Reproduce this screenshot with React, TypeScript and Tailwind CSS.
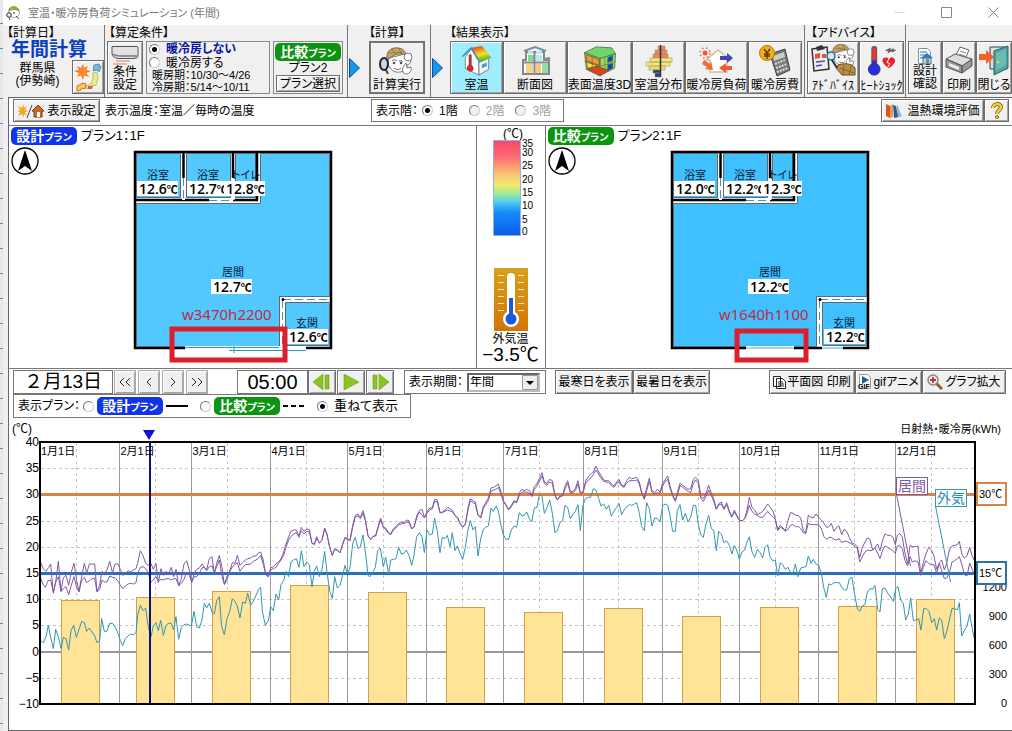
import type { ReactNode } from "react";

/* ---------- small shared pieces ---------- */

function PlanBadge({ kind }: { kind: "design" | "compare" }) {
  const color = kind === "design" ? "bg-[#1034ea]" : "bg-[#0a9410]";
  return (
    <span className={`inline-flex h-[18px] w-[66px] shrink-0 items-center justify-center rounded-[5px] text-[14px] leading-none font-bold text-white ${color}`}>
      {kind === "design" ? "設計" : "比較"}
      <span className="pt-[3px] text-[10px] leading-none">プラン</span>
    </span>
  );
}

function PushButton({ children, className = "", label }: { children: ReactNode; className?: string; label?: string }) {
  return (
    <button
      type="button"
      aria-label={label}
      className={`flex items-center justify-center border border-[#6e6e6e] bg-[#f0f0f0] whitespace-nowrap shadow-[inset_1px_1px_0_#fff,inset_-1px_-1px_0_#a5a5a5] ${className}`}
    >
      {children}
    </button>
  );
}

function ToolButton({ icon, text, className = "" }: { icon: ReactNode; text: string; className?: string }) {
  return (
    <button
      type="button"
      className={`flex h-[53px] flex-col items-center justify-between overflow-hidden border border-[#6e6e6e] pb-px text-[12px] leading-[14px] whitespace-nowrap shadow-[inset_1px_1px_0_#fff,inset_-1px_-1px_0_#a5a5a5] ${className}`}
    >
      {icon}
      <span>{text}</span>
    </button>
  );
}

function Radio({ name, children, checked, disabled, className = "" }: { name: string; children: ReactNode; checked?: boolean; disabled?: boolean; className?: string }) {
  return (
    <label className={`flex items-center whitespace-nowrap ${disabled ? "text-[#a0a0a0]" : ""} ${className}`}>
      <input
        type="radio"
        name={name}
        defaultChecked={checked}
        disabled={disabled}
        className="size-[11px] shrink-0 appearance-none rounded-full border border-t-[#777] border-r-[#ccc] border-b-[#ccc] border-l-[#777] bg-white checked:bg-[radial-gradient(circle,#000_2px,#fff_3px)] disabled:bg-[#f0f0f0]"
      />
      {children}
    </label>
  );
}

function StepArrow() {
  return (
    <svg viewBox="0 0 11 20" className="mt-[33px] h-5 w-[11px] shrink-0">
      <path d="M.5.5v19l10-9.500z" fill="#1597ee" stroke="#0a48ac" />
    </svg>
  );
}

/* ---------- toolbar icons ---------- */

function SheepFace() {
  return (
    <g stroke="#444" strokeWidth=".7">
      <path d="M10 13c-2 6 0 12 7 14 7 1 11-3 11-7 4-1 5-5 2-7-1-4-6-5-8-3z" fill="#fff" />
      <path d="M8 11c0-6 6-9 11-8 5 0 8 4 8 7-6-2-11-1-16 3-2 1-4 0-3-2z" fill="#c9a45c" />
      <path d="M13 4l5 6M20 3l2 6M10 8l14-1" stroke="#8a6a2c" fill="none" />
      <path d="M13 16c2-2 4-1 5 0M20 16c2-1 3 0 4 1M15 23c2 2 5 2 7 0" fill="none" stroke="#222" />
      <circle cx="15" cy="18" r=".9" fill="#111" />
      <circle cx="22" cy="18" r=".9" fill="#111" />
      <circle cx="29" cy="12" r="4" fill="#fff" />
      <path d="M24 22l3-4 1 5 4-1c1 3-1 7-5 7-3 0-4-3-3-7z" fill="#fff" />
    </g>
  );
}

function AppIcon() {
  return (
    <svg viewBox="0 0 16 16" className="size-4">
      <path d="M3 6c1-4 6-5 9-2 2 2 2 6-1 8-3 1-7 0-8-2z" fill="#fff" stroke="#888" strokeWidth=".7" />
      <path d="M3 4c3-4 9-3 10 2-3-2-7-2-10 0z" fill="#a4b82f" stroke="#66761c" strokeWidth=".6" />
      <circle cx="3" cy="10" r="2.300" fill="#dfe9ee" stroke="#333" />
      <circle cx="8" cy="8" r=".8" />
      <path d="M3 12l1 3M10 11l3 3" stroke="#555" />
    </svg>
  );
}

function WeatherMapIcon() {
  return (
    <svg viewBox="0 0 30 32" className="h-8 w-[30px]">
      <path d="M10 3l1 4 4-2-2 4 5 1-5 2 3 4-5-2-1 5-2-5-4 2 2-4-5-2 5-1-2-4 4 2z" fill="#f4741c" />
      <circle cx="10" cy="11" r="4" fill="#f98a2a" />
      <path d="M21 4l5-1 2 3-2 5-2-2-4 1z" fill="#71b9e4" stroke="#3477a9" strokeWidth=".7" />
      <path d="M20 12l4-1 1 6-2 7-5 1-4 3-1-3 5-2 2-5z" fill="#dff28a" stroke="#bfa733" strokeWidth=".7" />
      <path d="M4 25l6-3 3 1-1 5-3-1-1 2-4 1z" fill="#f8cb5a" stroke="#d06f2b" />
      <path d="M15 25l5 0-1 3-4 0z" fill="#ef5b34" />
    </svg>
  );
}

function AirconIcon() {
  return (
    <svg viewBox="0 0 30 23" className="h-[23px] w-[30px]">
      <path d="M2 3.500h25q1 0 1 2v8q-1 2-5 2H8q-6-1-6-5z" fill="#e2e2e2" stroke="#555" />
      <path d="M3 11q2 2 8 2h16" fill="none" stroke="#777" strokeWidth="1.500" />
      <path d="M6 18h14M3 21h14" fill="none" stroke="#eaa58d" strokeWidth="1.500" />
    </svg>
  );
}

function DetectiveIcon() {
  return (
    <svg viewBox="0 0 38 34" className="h-[34px] w-[38px]">
      <g transform="translate(1 3)"><SheepFace /></g>
      <path d="M8 28l2 4" stroke="#444" strokeWidth="2" />
      <ellipse cx="6" cy="22" rx="4" ry="6" fill="#c4dce8" stroke="#223" strokeWidth="2" />
    </svg>
  );
}

function HouseTempIcon() {
  return (
    <svg viewBox="0 0 34 36" className="mt-px h-9 w-[34px]">
      <defs>
        <linearGradient id="roof" x1="0" y1="0" x2=".3" y2="1">
          <stop offset="0" stopColor="#ed2416" /><stop offset=".4" stopColor="#f6a21d" /><stop offset=".6" stopColor="#f3e51d" /><stop offset="1" stopColor="#35b33b" />
        </linearGradient>
      </defs>
      <path d="M5 15l6-9 8 13v14L5 26z" fill="#fff" stroke="#555" strokeWidth=".7" />
      <path d="M19 19l10-4v12l-10 6z" fill="#f4f4f4" stroke="#555" strokeWidth=".7" />
      <path d="M11 5l11-2 10 12-12 5z" fill="url(#roof)" />
      <path d="M2 14l9-9 9 15" fill="none" stroke="#2c97c8" strokeWidth="1.500" />
      <path d="M22 22l5-2v4l-5 2z" fill="#3e9be0" />
      <path d="M10 13v12" stroke="#a33" strokeWidth="3" strokeLinecap="round" />
      <circle cx="10" cy="26" r="3" fill="#e0251c" stroke="#a33" />
    </svg>
  );
}

function SectionIcon() {
  return (
    <svg viewBox="0 0 34 34" className="mt-0.5 h-[34px] w-[34px]">
      <path d="M8 8h18v8h5v14H5V16h3z" fill="#fff" stroke="#888" strokeWidth="2" />
      <path d="M6 7l11-4 11 4M25 15l7-1" fill="none" stroke="#7894a4" strokeWidth="2" />
      <path d="M10 7h5v3h-5zM18 7h6v3h-6z" fill="#b9e5f6" />
      <path d="M10 11h6v6h-6z" fill="#7fdc86" /><path d="M18 11h6v6h-6z" fill="#b7e5f3" />
      <path d="M8 20h7v9H8z" fill="#f3d486" /><path d="M18 20h5v9h-5z" fill="#fac57e" /><path d="M24 20h6v9h-6z" fill="#8fe0a5" />
      <path d="M5 18.500h26M16.500 8v22" stroke="#888" strokeWidth="2" />
    </svg>
  );
}

function Surface3DIcon() {
  return (
    <svg viewBox="0 0 38 36" className="mt-px h-9 w-[38px]">
      <g stroke="#3b704a" strokeWidth=".8">
        <path d="M3 10L15 4l16 1 4 6-16 5z" fill="#72d66c" />
        <path d="M3 10l16 6v17L5 27z" fill="#f7b540" />
        <path d="M19 16l16-5-1 15-15 7z" fill="#8ee06a" />
        <path d="M5 12l13 5v6L5 18z" fill="#f49a3a" />
        <path d="M5 19l13 5-12 2z" fill="#fbe04b" />
        <path d="M5 27l10-3 14 4-10 6z" fill="#ea3c1d" />
        <path d="M27 15l5-2v5l-5 2zM27 22l5-1v5l-5 2z" fill="#1443c1" />
        <path d="M19 16v17M3 19l16 5 16-5M11 13v14M24 15v16" fill="none" stroke="#996717" />
      </g>
    </svg>
  );
}

function DistributionIcon() {
  return (
    <svg viewBox="0 0 30 34" className="mt-0.5 h-[34px] w-[30px]">
      <g stroke="#998a4c" strokeWidth=".5">
        <path d="M14 2h7v4h-7zM11 6h12v4H11zM9 10h15v4H9z" fill="#ed8468" />
        <path d="M6 14h22v4H6zM2 18h24v4H2z" fill="#f4e67e" />
        <path d="M5 22h16v4H5z" fill="#e8dc68" />
        <path d="M9 26h7v3H9zM11 29h5v4h-5z" fill="#204486" />
      </g>
      <path d="M16.500 1v32" stroke="#333" strokeWidth="1.500" />
    </svg>
  );
}

function LoadIcon() {
  return (
    <svg viewBox="0 0 36 32" className="mt-1 h-8 w-9">
      <path d="M7 14L19 4l12 10h-3v12H11V14z" fill="#fff" stroke="#d1bda0" strokeWidth="1.500" />
      <circle cx="6" cy="7" r="2.500" fill="#ee5c35" />
      <circle cx="6" cy="7" r="5" fill="none" stroke="#ee6b42" strokeWidth="1.500" strokeDasharray="1.500 2.500" />
      <path d="M5 14l6 4 1-3 2 9-8-1 2-2-5-3z" fill="#ef6a35" />
      <path d="M21 10h7V7l6 5-6 5v-3h-7z" fill="#4244b3" />
      <path d="M33 20h-6v-3l-7 5 7 5v-3h6z" fill="#ef5a2f" />
    </svg>
  );
}

function CostIcon() {
  return (
    <svg viewBox="0 0 34 34" className="mt-0.5 h-[34px] w-[34px]">
      <path d="M12 10l15-5 5 21-13 6z" fill="#777" stroke="#444" />
      <path d="M15 12l11-4 1 5-11 4z" fill="#c3d4bd" />
      <path d="M17 20l10-4M18 24l11-4M19 28l11-4" stroke="#ddd" strokeWidth="2" strokeDasharray="2 1" />
      <circle cx="9" cy="9" r="7.500" fill="#f3ad15" stroke="#bd760d" />
      <path d="M6 5l3 4 3-4M9 9v6M6 10h6M6 12h6" fill="none" stroke="#553800" strokeWidth="1.300" />
    </svg>
  );
}

function AdviceIcon() {
  return (
    <svg viewBox="0 0 48 35" className="h-[35px] w-12">
      <path d="M3 7l15-2 2 22-15 2z" fill="#eee" stroke="#333" strokeWidth="1.500" />
      <path d="M7 5l6-2 3 4-8 2z" fill="#333" />
      <path d="M6 12l5-1v5l-5 1zM13 12h4v4h-4z" fill="#e5533a" /><path d="M7 20l9-1M7 24l6-1" stroke="#45a" strokeWidth="1.500" />
      <g transform="translate(17 0) scale(.85)"><SheepFace /></g>
      <path d="M29 23c5-2 14-2 17 3v7H33l-6-7z" fill="#bb8f4a" stroke="#6b4b1c" />
      <path d="M31 26l14 5M35 23l-1 10M42 24l-2 9" stroke="#765023" strokeWidth=".7" />
      <circle cx="22" cy="14" r="4" fill="#cce8f1" stroke="#2f6589" strokeWidth="1.500" /><path d="M23 18l5 8" stroke="#333" strokeWidth="2" />
    </svg>
  );
}

function HeatShockIcon() {
  return (
    <svg viewBox="0 0 36 34" className="mt-[3px] h-[34px] w-9">
      <path d="M10 4v19" stroke="#555" strokeWidth="6" strokeLinecap="round" />
      <path d="M10 4v13" stroke="#ed3437" strokeWidth="4" strokeLinecap="round" />
      <path d="M10 16v10" stroke="#282ee0" strokeWidth="4" />
      <circle cx="10" cy="25" r="6" fill="#282ee0" stroke="#34346b" />
      <path d="M25 24c-9-6-7-11-3-11 2 0 3 1 3 2 1-2 2-3 4-2 5 2 2 8-4 11z" fill="#e62431" />
      <path d="M26 13l-3 5 3 1-2 4" fill="none" stroke="#fff" />
      <path d="M22 6l4-2-1 3 5-3M28 7l4-2" fill="none" stroke="#555" strokeWidth="1.500" />
    </svg>
  );
}

function DesignCheckIcon() {
  return (
    <svg viewBox="0 0 18 18" className="mt-[3px] size-[18px]">
      <path d="M2.500 1.500h9l3 3v12h-12z" fill="#f7f9fa" stroke="#7693a5" />
      <path d="M4 5h7M4 8h5M4 11h3" stroke="#49758b" />
      <path d="M5 11l6-5 6 5z" fill="#3175cf" /><path d="M7 11h8v6H7z" fill="#f5d266" stroke="#3175cf" /><path d="M10 12h3v5h-3z" fill="#4f8ed1" />
    </svg>
  );
}

function PrinterIcon() {
  return (
    <svg viewBox="0 0 32 32" className="mt-0.5 size-8">
      <path d="M12 13l5-10 9 3-4 9z" fill="#fff" stroke="#666" />
      <path d="M17 7l6 2M16 10l6 2" stroke="#888" />
      <path d="M3 15l9-5 17 5-9 7z" fill="#ddd" stroke="#555" />
      <path d="M3 15v8l16 6v-7zM19 22v7l10-7v-7z" fill="#999" stroke="#555" />
      <path d="M6 19l10 4v3L6 22z" fill="#eee" />
    </svg>
  );
}

function ExitIcon() {
  return (
    <svg viewBox="0 0 32 34" className="mt-px h-[34px] w-8">
      <path d="M12 4h17v22H12z" fill="#ddd" stroke="#345" /><path d="M16 8l14-5v22l-14 7z" fill="#51a6a0" stroke="#27615f" />
      <path d="M18 10l10-4v16l-10 5z" fill="#6dbab2" /><circle cx="20" cy="19" r="1.300" fill="#eed34a" />
      <path d="M1 11h7V7l8 7-8 7v-4H1z" fill="#f26223" />
    </svg>
  );
}

/* ---------- header ---------- */

function TitleBar() {
  return (
    <header className="flex h-[25px] items-center bg-white pl-[3px]">
      <AppIcon />
      <h1 className="ml-[6px] text-[11px] text-[#777] whitespace-nowrap">室温・暖冷房負荷シミュレーション (年間)</h1>
      <div className="ml-auto flex gap-9 pr-[13px]">
        <button type="button" aria-label="最小化"><svg viewBox="0 0 11 11" className="size-[11px]"><path d="M0 5.500h11" stroke="#ddd" /></svg></button>
        <button type="button" aria-label="最大化"><svg viewBox="0 0 11 11" className="size-[11px]"><path d="M.5.5h10v10H.5z" fill="none" stroke="#888" /></svg></button>
        <button type="button" aria-label="閉じる"><svg viewBox="0 0 11 11" className="size-[11px]"><path d="M.5.5l10 10M10.500.5l-10 10" stroke="#888" /></svg></button>
      </div>
    </header>
  );
}

const resultTools = [
  { text: "室温", icon: <HouseTempIcon />, style: "w-[53px] bg-[#9feeff]" },
  { text: "断面図", icon: <SectionIcon />, style: "w-[64px] bg-[#f0f0f0]" },
  { text: "表面温度3D", icon: <Surface3DIcon />, style: "w-[65px] bg-[#f0f0f0]" },
  { text: "室温分布", icon: <DistributionIcon />, style: "w-[53px] bg-[#f0f0f0]" },
  { text: "暖冷房負荷", icon: <LoadIcon />, style: "w-[63px] bg-[#f0f0f0]" },
  { text: "暖冷房費", icon: <CostIcon />, style: "w-[54px] bg-[#f0f0f0]" },
];

function Toolbar() {
  return (
    <div className="flex h-[72px] overflow-hidden bg-[#f0f0f0]">
      <section className="w-[102px] shrink-0 border-r border-[#777]">
        <h2 className="h-4 pl-1 leading-4">【計算日】</h2>
        <p className="pl-2 text-[19px] leading-[17px] font-bold text-[#0b3fc0]">年間計算</p>
        <div className="flex">
          <p className="w-[69px] pt-1 text-center leading-[13px]">群馬県<br />(伊勢崎)</p>
          <PushButton label="地域" className="mt-0.5 h-[34px] w-8"><WeatherMapIcon /></PushButton>
        </div>
      </section>

      <section className="w-[243px] shrink-0 border-r border-[#777]">
        <h2 className="h-4 pl-1 leading-4">【算定条件】</h2>
        <div className="flex gap-[3px] pl-0.5">
          <PushButton className="h-[53px] w-9 flex-col leading-[13px]"><AirconIcon /><span>条件<br />設定</span></PushButton>
          <div className="h-[53px] w-[124px] border border-[#888] pl-0.5">
            <Radio name="hvac" checked className="h-[14px] gap-1.5 font-bold text-[#0b12a0]">暖冷房しない</Radio>
            <Radio name="hvac" className="h-[13px] gap-1.5">暖冷房する</Radio>
            <p className="pl-[3px] text-[11px] leading-[12px] whitespace-nowrap">暖房期：10/30～4/26<br />冷房期：5/14～10/11</p>
          </div>
          <div className="flex h-[53px] w-[70px] flex-col items-center border border-[#888] pt-px">
            <PlanBadge kind="compare" />
            <span className="leading-[14px]">プラン2</span>
            <PushButton className="h-[17px] w-[64px]">プラン選択</PushButton>
          </div>
        </div>
      </section>

      <section className="flex w-[83px] shrink-0 border-r border-[#777] pl-px">
        <StepArrow />
        <div>
          <h2 className="h-4 pl-[9px] leading-4">【計算】</h2>
          <ToolButton icon={<DetectiveIcon />} text="計算実行" className="ml-[9px] w-14 outline-1 -outline-offset-2 outline-[#777]" />
        </div>
      </section>

      <section className="flex grow border-r border-[#777] pr-0.5 pl-px">
        <StepArrow />
        <div className="grow">
          <h2 className="h-4 pl-[7px] leading-4">【結果表示】</h2>
          <div className="flex pl-[7px]">
            {resultTools.map((tool) => (
              <ToolButton key={tool.text} icon={tool.icon} text={tool.text} className={`grow ${tool.style}`} />
            ))}
          </div>
        </div>
      </section>

      <section className="w-[101px] shrink-0 border-r border-[#777] pl-0.5">
        <h2 className="h-4 pl-1 leading-4">【アドバイス】</h2>
        <div className="flex">
          <ToolButton icon={<AdviceIcon />} text="ｱﾄﾞﾊﾞｲｽ" className="w-[52px] font-['Noto_Sans_CJK_JP',sans-serif] [font-feature-settings:normal]" />
          <ToolButton icon={<HeatShockIcon />} text="ﾋｰﾄｼｮｯｸ" className="w-[45px] font-['Noto_Sans_CJK_JP',sans-serif] [font-feature-settings:normal]" />
        </div>
      </section>

      <div className="flex shrink-0 pt-4 pl-0.5">
        <PushButton className="h-[53px] w-[34px] flex-col justify-between pb-px leading-[13px]"><DesignCheckIcon /><span>設計<br />確認</span></PushButton>
        <ToolButton icon={<PrinterIcon />} text="印刷" className="w-[34px]" />
        <ToolButton icon={<ExitIcon />} text="閉じる" className="w-9" />
      </div>
    </div>
  );
}

function DisplayRow() {
  return (
    <div className="flex h-[28px] items-start border-b border-[#777] pt-px">
      <div className="flex w-[362px] items-center">
        <PushButton className="ml-1 h-[23px] w-[87px] gap-0.5">
          <svg viewBox="0 0 28 14" className="h-[14px] w-7">
            <path d="M6 0l1 4 3-2-2 4 4 1-4 1 2 4-3-2-1 4-1-4-4 2 2-4-3-1 3-1-2-4 4 2z" fill="#f5a81c" />
            <path d="M10 14l5-13" stroke="#444" />
            <path d="M15 7l6-6 6 6h-2v6h-8V7z" fill="#c66a2a" stroke="#7e3b12" /><path d="M20 8h3v5h-3z" fill="#fff" />
          </svg>
          表示設定
        </PushButton>
        <span className="ml-[5px] whitespace-nowrap">表示温度：室温／毎時の温度</span>
      </div>
      <fieldset className="flex h-[23px] w-[193px] items-center border border-[#777] pl-1">
        <span className="mr-1">表示階：</span>
        <Radio name="floor" checked className="mr-[11px] gap-1.5">1階</Radio>
        <Radio name="floor" disabled className="mr-[11px] gap-1.5">2階</Radio>
        <Radio name="floor" disabled className="gap-1.5">3階</Radio>
      </fieldset>
      <div className="ml-auto flex pr-[3px]">
        <PushButton className="h-[23px] w-[103px] gap-1">
          <svg viewBox="0 0 18 16" className="h-4 w-[18px]">
            <path d="M11 15l6-2-4-7z" fill="#bbb" /><path d="M1 1l4 2v12l-4-2z" fill="#d9541f" /><path d="M5 3l3-2v13l-3 1z" fill="#f19a49" />
            <path d="M8 2l3 1 2 11-4 1z" fill="#285a9b" /><path d="M11 3l2 0 3 10-2 1z" fill="#8cb6dd" />
          </svg>
          温熱環境評価
        </PushButton>
        <PushButton label="ヘルプ" className="h-[23px] w-[25px]">
          <svg viewBox="0 0 14 18" className="h-[18px] w-[14px]">
            <path d="M3 6c0-5 8-5 8-1 0 3-4 3-4 7" fill="none" stroke="#6d5713" strokeWidth="4" /><path d="M3 6c0-5 8-5 8-1 0 3-4 3-4 7" fill="none" stroke="#f5d132" strokeWidth="2.500" />
            <circle cx="7" cy="15" r="1.600" fill="#f5d132" stroke="#6d5713" strokeWidth=".8" />
          </svg>
        </PushButton>
      </div>
    </div>
  );
}

/* ---------- floor plans ---------- */

type PlanData = {
  kind: "design" | "compare";
  title: string;
  fill: string;
  temps: string[];
  note: string;
  box: { x: number; y: number; w: number; h: number };
};

const plans: PlanData[] = [
  { kind: "design", title: "プラン1：1F", fill: "#52c8ff", temps: ["12.6", "12.7", "12.8", "12.7", "12.6"], note: "w3470h2200", box: { x: 172, y: 329, w: 113, h: 31 } },
  { kind: "compare", title: "プラン2：1F", fill: "#40c0ff", temps: ["12.0", "12.2", "12.3", "12.2", "12.2"], note: "w1640h1100", box: { x: 200, y: 331, w: 69, h: 29 } },
];

const rooms = [
  { name: "浴室", x: 147, y: 179, vx: 137, vy: 181 },
  { name: "浴室", x: 197, y: 179, vx: 187, vy: 181 },
  { name: "トイレ", x: 232, y: 179, vx: 224, vy: 181 },
  { name: "居間", x: 222, y: 276, vx: 211, vy: 279 },
  { name: "玄関", x: 296, y: 327, vx: 287, vy: 329 },
];

function FloorPlan({ plan }: { plan: PlanData }) {
  const isDesign = plan.kind === "design";
  return (
    <svg viewBox="130 146 210 222" className="ml-[91px] h-[222px] w-[210px] shrink-0">
      <path d="M135 152h196v196H135z" fill="#fff" stroke="#000" strokeWidth="2.500" />
      <g fill={plan.fill} stroke="#5b6b75">
        <path d="M136.500 153.500h44v44h-44zM186.500 153.500h44v44h-44zM235.500 153.500h20v44h-20zM285.500 302.500h44v43h-44z" />
        <path d="M260.500 153.500h69v143h-50v50h-143v-143h124z" />
      </g>
      <path d="M183.500 152v26M233 152v26M257 152v48M135 200h74M233 200h25" stroke="#000" strokeWidth="2.500" />
      <path d="M183.500 178v22M233 178v22M209 200.500h24" stroke="#fff" strokeWidth="3" />
      <path d="M183.500 178v22M209 200.500h24M283 299.500h48M282.500 300v46" fill="none" stroke="#4d91ab" strokeDasharray="8 4" />
      <circle cx="283" cy="299.500" r="1.500" />
      {isDesign ? (
        <g>
          <path d="M185 348h121" stroke="#fff" strokeWidth="4" />
          <path d="M185 347.500h94M229 350.500h77M234 346v7" stroke="#2f95c8" />
        </g>
      ) : (
        <g>
          <path d="M209 348h48M285 348h21" stroke="#fff" strokeWidth="4" />
          <path d="M209 348h48M285 348h21" stroke="#58a8cf" strokeWidth="1" />
        </g>
      )}
      {rooms.map((room, i) => (
        <text key={i} x={room.x} y={room.y} fontSize="11" fill="#0c2036">{room.name}</text>
      ))}
      {rooms.map((room, i) => (
        <g key={i}>
          <rect x={room.vx} y={room.vy} width="41" height="15" fill="#fff" />
          <text x={room.vx + 2} y={room.vy + 13} fontSize="14" fontWeight="600" className="font-['Open_Sans','Noto_Sans_CJK_JP',sans-serif]">
            {plan.temps[i]}<tspan fontSize="11">℃</tspan>
          </text>
        </g>
      ))}
      <text x="182" y="320" fontSize="15" fill="#c22b45" className="font-['Noto_Sans',sans-serif]">{plan.note}</text>
      <rect x={plan.box.x} y={plan.box.y} width={plan.box.w} height={plan.box.h} fill="none" stroke="#dc1f2b" strokeWidth="5" />
    </svg>
  );
}

function PlanPane({ plan }: { plan: PlanData }) {
  return (
    <section className="min-w-0 flex-1 pl-0.5">
      <div className="flex h-5 items-center gap-1">
        <PlanBadge kind={plan.kind} />
        <h2 className="text-[13px] whitespace-nowrap">{plan.title}</h2>
      </div>
      <div className="flex items-start">
        <svg viewBox="0 0 28 28" className="mt-px size-7 shrink-0">
          <circle cx="14" cy="14" r="13" fill="#fff" stroke="#000" strokeWidth="1.300" />
          <path d="M14 3l7 21-7-5-7 5z" />
        </svg>
        <FloorPlan plan={plan} />
      </div>
    </section>
  );
}

const scaleTicks = [
  { v: 35, y: 21 }, { v: 30, y: 30 }, { v: 25, y: 43 }, { v: 20, y: 57 },
  { v: 15, y: 70 }, { v: 10, y: 83 }, { v: 5, y: 97 }, { v: 0, y: 109 },
];

function ScaleColumn() {
  return (
    <aside className="flex w-[70px] shrink-0 flex-col items-center border-x border-[#777]">
      <svg viewBox="477 126 68 142" className="h-[142px] w-[68px]">
        <defs>
          <linearGradient id="scale" x1="0" y1="0" x2="0" y2="1">
            <stop offset="0" stopColor="#f94768" /><stop offset=".17" stopColor="#fb6b72" /><stop offset=".35" stopColor="#fbc275" />
            <stop offset=".47" stopColor="#f4e96f" /><stop offset=".56" stopColor="#9fec93" /><stop offset=".64" stopColor="#59d0ee" />
            <stop offset=".75" stopColor="#168dfa" /><stop offset="1" stopColor="#0b5ce9" />
          </linearGradient>
        </defs>
        <text x="503" y="138" fontSize="12">(℃)</text>
        <path d="M493.500 140.500h27v95h-27z" fill="url(#scale)" stroke="#8cb3e8" />
        {scaleTicks.map((t) => (
          <text key={t.v} x="522" y={t.y + 126} fontSize="10">{t.v}</text>
        ))}
      </svg>
      <svg viewBox="0 0 34 63" className="h-[63px] w-[34px]">
        <defs><linearGradient id="amber" x1="0" y1="0" x2="0" y2="1"><stop offset="0" stopColor="#d7a01a" /><stop offset="1" stopColor="#d57408" /></linearGradient></defs>
        <path d="M0 0h34v63H0z" fill="url(#amber)" />
        <path d="M4 7.500h6M4 14.500h6M4 21.500h6M4 28.500h6M4 35.500h6M4 42.500h6M24 7.500h6M24 14.500h6M24 21.500h6M24 28.500h6M24 35.500h6M24 42.500h6" stroke="#f7e7b3" />
        <path d="M17 9v40" stroke="#fff" strokeWidth="8" strokeLinecap="round" /><circle cx="17" cy="51" r="8" fill="#fff" />
        <path d="M17 30v20" stroke="#145bd8" strokeWidth="4" /><circle cx="17" cy="51" r="5.500" fill="#145bd8" />
      </svg>
      <p className="text-center leading-[16px] whitespace-nowrap">外気温<br /><span className="text-[19px]">−3.5℃</span></p>
    </aside>
  );
}

/* ---------- playback and period controls ---------- */

function ControlRow() {
  return (
    <div className="flex h-[26px] items-start border-t border-[#777] pt-px pr-[6px] pl-1">
      <output className="flex h-6 w-[100px] items-center justify-center border border-[#777] text-[19px] whitespace-nowrap [font-feature-settings:normal]">２月13日</output>
      <div className="ml-px flex h-6 gap-0.5">
        {["<<", "<", ">", ">>"].map((t) => (
          <PushButton key={t} label={t} className="w-[22px] border-[#aaa]">
            <svg viewBox="0 0 14 12" className="h-3 w-[14px]" fill="none" stroke="#222">
              <path d={t === "<<" ? "M6 2L2 6l4 4M12 2L8 6l4 4" : t === "<" ? "M9 2L5 6l4 4" : t === ">" ? "M5 2l4 4-4 4" : "M2 2l4 4-4 4M8 2l4 4-4 4"} />
            </svg>
          </PushButton>
        ))}
      </div>
      <output className="ml-[29px] flex h-6 w-[71px] items-center justify-center border border-[#777] text-[20px]">05:00</output>
      <div className="flex h-6 gap-px">
        <PushButton label="戻す" className="w-7"><svg viewBox="0 0 20 16" className="h-4 w-5" fill="#8cc41e"><path d="M11 0v16L1 8zM13 1h4v14h-4z" stroke="#5d8f18" strokeWidth=".5" /></svg></PushButton>
        <PushButton label="再生" className="w-7"><svg viewBox="0 0 20 16" className="h-4 w-5" fill="#8cc41e"><path d="M3 0l15 8-15 8z" stroke="#5d8f18" strokeWidth=".5" /></svg></PushButton>
        <PushButton label="進む" className="w-7"><svg viewBox="0 0 20 16" className="h-4 w-5" fill="#8cc41e"><path d="M3 1h4v14H3zM9 0l10 8-10 8z" stroke="#5d8f18" strokeWidth=".5" /></svg></PushButton>
      </div>
      <div className="ml-[10px] flex h-6 w-[142px] items-center border border-[#777] pl-1">
        <label htmlFor="period" className="w-[58px] whitespace-nowrap">表示期間：</label>
        <div className="relative">
          <select id="period" defaultValue="year" className="h-[19px] w-[73px] appearance-none border-2 border-t-[#666] border-r-[#bbb] border-b-[#bbb] border-l-[#666] bg-white pl-px leading-none">
            <option value="year">年間</option>
            <option value="month">月間</option>
          </select>
          <svg viewBox="0 0 16 15" className="pointer-events-none absolute top-0.5 right-0.5 h-[15px] w-4"><path d="M.5.5h15v14H.5z" fill="#eee" stroke="#999" /><path d="M4 6h8l-4 4z" /></svg>
        </div>
      </div>
      <div className="ml-[9px] flex h-6">
        <PushButton className="w-[78px]">最寒日を表示</PushButton>
        <PushButton className="w-[77px]">最暑日を表示</PushButton>
      </div>
      <div className="ml-auto flex h-6">
        <PushButton className="w-[86px] gap-px">
          <svg viewBox="0 0 13 13" className="size-[13px]" fill="none" stroke="#222"><path d="M.5.5h7v10h-7zM3.500 2.500h6l3 3v7h-9z" fill="#fff" /><path d="M5 6h5M5 8h6M5 10h6" /></svg>
          平面図 印刷
        </PushButton>
        <PushButton className="w-[67px] gap-px">
          <svg viewBox="0 0 14 16" className="h-4 w-[14px]"><path d="M1.500.5h8l3 3v11h-11z" fill="#fff" stroke="#999" /><path d="M4 2l7 4-7 4z" fill="#255c94" /><text x="0" y="15" fontSize="7" fontWeight="bold">GIF</text></svg>
          gifアニメ
        </PushButton>
        <PushButton className="w-[84px] gap-0.5">
          <svg viewBox="0 0 16 16" className="size-4"><path d="M9 9l6 6" stroke="#9a5b2b" strokeWidth="3" /><circle cx="6" cy="6" r="5" fill="#e7f1f7" stroke="#888" strokeWidth="1.500" /><path d="M6 3v6M3 6h6" stroke="#d22a35" strokeWidth="1.800" /></svg>
          グラフ拡大
        </PushButton>
      </div>
    </div>
  );
}

function PlanSelectRow() {
  return (
    <div className="h-[26px] pl-1">
      <fieldset className="flex h-6 w-[398px] items-center border border-[#777] pl-1 whitespace-nowrap">
        <span className="w-[65px]">表示プラン：</span>
        <Radio name="plan" className="w-[117px] gap-[3px]">
          <PlanBadge kind="design" />
          <svg viewBox="0 0 22 2" className="h-0.5 w-[22px]"><path d="M0 1h22" stroke="#000" strokeWidth="2" /></svg>
        </Radio>
        <Radio name="plan" className="w-[117px] gap-[3px]">
          <PlanBadge kind="compare" />
          <svg viewBox="0 0 22 2" className="h-0.5 w-[22px]"><path d="M0 1h22" stroke="#000" strokeWidth="2" strokeDasharray="5 3" /></svg>
        </Radio>
        <Radio name="plan" checked className="gap-[6px] text-[13px]">重ねて表示</Radio>
      </fieldset>
    </div>
  );
}

/* ---------- yearly chart ---------- */

const months = [
  { start: 40, mid: 76.5, bar: 61, top: 600.5 },
  { start: 119.5, mid: 155.5, bar: 136.5, top: 597.5 },
  { start: 191.5, mid: 227.5, bar: 212.5, top: 591.5 },
  { start: 270.5, mid: 306.5, bar: 290.5, top: 585.5 },
  { start: 347.5, mid: 383.5, bar: 368.5, top: 592.5 },
  { start: 426.5, mid: 462.5, bar: 446.5, top: 607.5 },
  { start: 503.5, mid: 539.5, bar: 524.5, top: 612.5 },
  { start: 583.5, mid: 618.5, bar: 604.5, top: 608.5 },
  { start: 662.5, mid: 698.5, bar: 682.5, top: 616.5 },
  { start: 739.5, mid: 775.5, bar: 760.5, top: 607.5 },
  { start: 818.5, mid: 854.5, bar: 838.5, top: 606.5 },
  { start: 895.5, mid: 931.5, bar: 916.5, top: 599.5 },
];

const degrees = [40, 35, 30, 25, 20, 15, 10, 5, 0, -5, -10];
const yOf = (deg: number) => 442 + (40 - deg) * 5.24;

// Daily traces, one string per third of the year, at three units to the pixel
const outdoor = [
  "123,633 130,638 138,620 145,586 152,622 160,656 167,598 175,620 183,656 190,622 198,626 206,660 213,602 221,586 229,622 237,598 245,574 253,578 260,604 268,594 276,606 284,618 291,638 299,632 305,566 313,604 321,604 329,580 338,580 346,592 354,610 361,632 368,647 376,626 384,618 392,612 400,614 408,608 413,556 421,526 429,542 437,534 445,592 453,620 460,588 468,578 475,602 482,571 490,616 498,586 506,580 514,580 521,600 528,560 536,628 544,592 552,584 560,582 574,588 582,544 590,590 598,594 606,570 613,520 620,534 628,520 636,546 643,552 650,512 658,500 665,590 673,614 681,566 690,542 697,506 705,514 712,528 720,564 728,516 736,520 743,490 752,526 760,514 768,496 776,478 782,472 787,544 796,586 805,572 812,530 820,542 828,492 836,510 843,464 851,452 858,424 866,440 873,396 881,390 889,386 897,412 904,362 912,410 920,396 928,404 936,470 943,424 950,408 958,440 966,418 974,364 981,426 989,482 997,506 1004,440 1012,474 1020,466",
  "0,466 8,436 15,406 22,432 30,414 38,342 46,322 54,356 61,350 69,315 77,372 84,436 90,440 98,428 106,412 113,362 121,354 130,410 137,382 146,432 152,390 160,388 168,386 176,352 184,372 192,370 199,360 207,376 215,406 222,376 230,320 238,308 246,320 253,368 261,300 269,314 277,312 284,265 292,304 300,368 307,322 315,326 322,316 330,350 337,308 345,362 352,348 360,370 368,388 376,352 384,300 391,272 399,300 406,290 414,378 422,326 430,298 437,292 445,288 453,234 460,244 468,228 475,242 483,286 490,314 498,328 506,328 514,300 522,288 530,292 538,248 546,258 553,256 560,246 568,266 575,276 583,234 591,232 598,194 606,198 613,250 621,232 629,210 637,250 645,308 652,302 660,278 668,272 675,226 683,232 691,266 699,252 706,244 714,224 721,302 729,226 736,206 745,202 752,202 760,176 768,180 776,206 783,228 791,222 799,238 806,226 814,258 822,244 830,232 837,220 845,254 852,240 860,230 868,224 875,226 883,222 890,218 898,250 905,290 913,302 920,218 928,236 936,288 944,264 952,266 960,276 968,228 975,222 983,226 990,256 998,304 1006,304 1012,242 1020,224",
  "0,224 8,270 16,250 24,276 32,262 40,226 47,226 55,284 63,316 70,322 78,282 86,256 94,296 101,300 109,362 116,304 124,312 132,338 140,332 148,346 156,372 163,346 170,360 178,388 186,366 194,360 201,336 208,320 216,366 224,382 232,358 240,368 248,384 255,352 263,344 270,380 278,392 286,390 293,438 301,398 309,406 316,418 324,412 331,428 339,430 346,402 354,440 362,414 370,412 378,410 385,378 393,400 400,388 408,402 416,406 424,430 432,476 439,502 446,462 454,464 462,458 470,458 478,458 486,474 494,480 500,480 508,446 516,442 524,494 532,536 539,544 547,528 555,524 562,486 570,476 578,478 585,466 593,538 600,546 607,476 615,474 623,490 631,500 640,514 647,476 654,470 662,510 670,520 677,570 685,552 692,504 700,572 708,570 716,566 723,600 731,536 739,536 747,544 755,578 763,566 770,600 778,564 785,570 793,626 800,606 808,570 816,536 824,536 832,540 838,518 845,618 853,602 861,588 869,552 876,592 882,622",
];

const livingDesign = [
  "123,400 130,416 138,424 146,412 152,402 160,490 168,450 175,394 183,484 190,444 198,436 206,466 214,426 222,400 230,452 237,484 245,440 253,400 260,430 268,402 276,402 284,402 291,484 299,466 306,424 313,430 321,420 329,394 338,430 345,402 354,402 361,418 368,436 376,432 384,422 392,426 400,420 408,416 413,400 421,362 429,376 437,400 445,406 453,400 460,418 468,400 475,458 483,416 490,436 498,424 506,432 514,412 521,440 528,418 536,468 544,446 552,402 560,392 568,420 575,458 583,430 590,418 598,414 606,402 613,412 620,420 628,386 636,380 643,430 650,400 658,376 666,412 673,464 681,450 690,420 697,398 705,400 712,376 720,406 728,398 736,390 743,386 752,384 760,378 768,378 776,368 782,366 790,390 797,434 805,440 812,414 820,410 828,402 836,396 843,386 851,366 858,342 866,320 873,304 881,300 889,300 897,318 904,292 912,304 920,298 928,298 936,340 943,342 950,320 958,340 966,330 974,294 981,312 989,352 997,376 1004,356 1012,360 1020,368",
  "0,368 8,342 15,322 22,326 30,332 38,286 46,256 54,252 61,262 69,242 76,268 84,316 92,328 100,318 107,316 114,292 122,264 130,292 137,294 145,308 152,312 160,296 168,290 176,280 184,276 192,278 200,270 207,272 215,296 222,292 230,258 238,242 246,238 253,262 261,246 269,234 277,234 284,208 292,210 300,248 307,246 315,240 322,232 330,236 338,242 346,258 353,262 360,280 368,290 376,282 384,234 391,206 399,212 406,216 414,254 422,262 430,230 437,218 445,204 453,174 460,172 468,168 475,162 483,186 490,212 498,224 506,238 514,226 522,212 530,216 538,188 546,178 553,182 560,178 568,182 576,196 583,170 590,162 598,146 606,128 613,156 621,160 629,148 637,152 645,196 652,208 660,198 668,196 676,166 683,152 691,184 699,184 706,176 714,152 721,188 729,186 737,152 745,140 752,134 760,126 768,108 776,126 783,136 791,150 799,152 806,152 814,162 822,168 830,156 837,148 845,166 852,168 860,152 868,142 875,146 883,144 890,142 898,156 905,186 913,204 920,174 928,144 936,182 944,188 952,178 960,186 968,160 975,150 983,138 990,168 998,194 1006,212 1013,184 1020,160",
  "0,160 8,166 16,172 24,178 32,176 40,148 47,142 55,152 63,200 70,206 78,190 86,166 94,190 101,206 109,236 117,220 124,216 132,236 140,218 148,242 155,260 163,240 171,256 179,272 187,272 194,266 201,240 208,202 216,232 224,240 232,254 240,250 248,244 255,234 263,222 271,232 279,244 286,266 293,300 301,286 309,294 316,302 324,272 331,248 339,250 347,256 355,256 362,264 370,302 377,310 385,256 393,262 400,264 408,252 416,262 424,270 432,280 440,292 447,290 454,280 462,304 470,292 477,288 485,314 492,298 500,304 508,322 516,338 524,342 532,350 539,382 547,352 555,336 562,324 570,328 578,360 585,352 593,342 600,362 608,330 615,312 623,316 631,316 639,322 646,344 652,316 659,310 667,322 675,370 683,402 690,346 697,350 706,350 714,348 722,432 730,398 738,372 746,352 754,360 762,378 770,418 778,398 785,390 793,420 800,400 808,360 816,348 824,346 832,344 838,334 846,374 853,384 861,378 869,352 876,376 882,390",
];

const livingCompare = [
  "123,446 130,466 136,472 144,452 152,450 160,486 168,454 175,440 183,484 190,476 198,470 206,494 214,466 222,440 230,472 237,486 245,450 253,442 260,458 268,452 276,446 284,444 291,486 299,478 306,450 313,456 321,456 329,438 338,442 346,444 354,454 361,466 368,476 376,468 384,462 392,460 400,462 408,458 413,430 421,412 429,410 437,416 445,430 453,456 460,450 468,440 475,454 483,448 490,450 498,446 506,446 514,450 521,446 528,446 536,466 544,460 552,448 560,426 568,436 575,456 583,440 590,440 598,430 606,414 613,412 620,422 628,410 636,408 643,428 650,410 658,390 666,440 673,462 681,440 690,424 697,410 705,404 712,398 720,424 728,412 736,404 752,402 760,394 768,390 776,384 782,376 790,404 797,432 805,440 812,420 820,416 828,412 836,400 843,390 851,376 858,352 866,330 873,320 881,312 889,308 897,322 904,302 912,312 920,304 928,306 936,340 943,344 950,326 958,338 966,330 974,296 981,314 989,352 997,376 1004,358 1012,362 1020,368",
  "0,368 8,344 15,324 22,328 30,332 38,292 46,260 54,258 61,266 69,250 76,272 84,318 92,328 100,320 107,318 114,294 122,270 130,292 137,298 145,310 152,314 160,300 168,294 176,284 184,282 192,280 200,276 207,278 215,296 222,292 230,264 238,246 253,264 261,250 269,240 277,236 284,214 292,216 300,248 307,248 322,240 338,246 346,258 353,264 360,280 368,292 376,284 384,240 391,212 399,218 406,222 414,256 422,264 430,236 437,224 445,212 453,184 460,180 468,178 475,172 483,192 490,214 498,226 506,240 514,230 522,216 530,218 538,196 546,186 560,186 568,190 576,200 583,178 590,170 598,154 606,138 613,160 621,166 629,156 637,160 645,198 652,210 660,200 668,198 676,174 683,160 691,188 699,188 706,182 714,162 721,190 729,188 737,160 745,150 752,144 760,134 768,120 776,132 783,144 791,154 806,158 814,166 822,172 830,160 837,156 845,168 852,172 860,160 868,152 883,152 890,150 898,162 905,190 913,208 920,182 928,154 936,186 944,192 952,188 960,190 968,168 975,156 983,148 990,174 998,198 1006,214 1013,192 1020,168",
  "0,166 8,172 24,184 32,188 40,160 47,150 55,160 63,206 70,214 78,200 86,180 94,196 101,214 109,238 117,224 124,222 132,238 140,224 148,246 155,262 163,246 171,260 179,272 187,272 194,266 201,252 208,226 216,244 224,252 232,256 240,262 248,262 255,254 263,244 271,254 279,262 286,268 293,302 301,292 309,296 316,304 324,298 331,286 339,284 347,290 355,290 362,296 370,308 377,310 385,280 393,284 400,284 408,284 416,284 424,296 432,320 440,328 447,322 454,322 462,328 470,330 477,326 485,338 492,334 500,334 516,342 524,350 532,354 539,396 547,380 555,366 562,360 570,362 578,360 585,354 593,370 600,386 608,360 615,348 623,352 631,358 639,362 646,370 652,348 659,346 667,356 675,392 683,408 690,380 697,396 706,392 714,396 722,436 730,412 738,392 746,400 754,404 762,404 770,430 778,400 785,422 793,446 800,444 808,430 816,396 824,392 832,386 838,380 846,404 853,434 861,438 869,400 876,416 882,432",
];

function Trace({ parts, color }: { parts: string[]; color: string }) {
  return (
    <g fill="none" stroke={color} strokeWidth="3" strokeLinejoin="round">
      {parts.map((points, i) => (
        <polyline key={i} points={points} transform={`translate(${i * 340} 430) scale(.33333)`} />
      ))}
    </g>
  );
}

function YearChart() {
  return (
    <svg viewBox="9 420 1003 310" className="block h-auto w-full" role="img" aria-label="年間の室温と日射熱・暖冷房">
      <g shapeRendering="crispEdges">
        {months.map((m) => (
          <path key={m.mid} d={`M${m.mid} 443V703`} stroke="#c6c6c6" strokeDasharray="3 3" />
        ))}
        {degrees.map((d) => (
          <path key={d} d={`M41 ${Math.round(yOf(d)) + 0.5}H974`} stroke="#c6c6c6" strokeDasharray="3 3" />
        ))}
        {months.slice(1).map((m) => (
          <path key={m.start} d={`M${m.start} 443V703`} stroke="#999" />
        ))}
        <path d="M41 652H974" stroke="#999" strokeWidth="2" />
        {months.map((m) => (
          <rect key={m.bar} x={m.bar} y={m.top} width="38" height={703.5 - m.top} fill="#ffe498" stroke="#d1a144" />
        ))}
      </g>
      <path d="M41 494.500H976" stroke="#dc8341" strokeWidth="3" />
      <path d="M41 573.500H976" stroke="#2b70c0" strokeWidth="3" />
      <Trace parts={outdoor} color="#3096b1" />
      <Trace parts={livingCompare} color="#8059a5" />
      <Trace parts={livingDesign} color="#8059a5" />
      <path d="M896.500 494l14 72" stroke="#8059a5" />
      <path d="M935.500 506l15 76" stroke="#3096b1" />
      <path d="M40 442h935v262H40z" fill="none" stroke="#000" strokeWidth="2" />
      <path d="M150 442v262" stroke="#10107d" strokeWidth="2" />
      <path d="M143 430h12l-6 10z" fill="#0c12cf" />

      <text x="12" y="433" fontSize="12">(℃)</text>
      <text x="1001" y="433" fontSize="11" textAnchor="end">日射熱・暖冷房(kWh)</text>
      {degrees.map((d) => (
        <text key={d} x="39" y={yOf(d) + 4} fontSize="12" textAnchor="end">{String(d).replace("-", "−")}</text>
      ))}
      {months.map((m, i) => (
        <text key={i} x={m.start + 1} y="455" fontSize="11">{`${i + 1}月1日`}</text>
      ))}
      {[1200, 900, 600, 300, 0].map((v, i) => (
        <text key={v} x="1007" y={591 + i * 29} fontSize="11" textAnchor="end">{v}</text>
      ))}

      <rect x="896.500" y="477.500" width="31" height="17" fill="#fff" stroke="#8059a5" />
      <text x="898" y="491" fontSize="14" fill="#8059a5">居間</text>
      <rect x="935.500" y="489.500" width="31" height="17" fill="#fff" stroke="#3096b1" />
      <text x="937" y="503" fontSize="14" fill="#1e93b5">外気</text>
      <rect x="977" y="483" width="29" height="22" fill="#fff" stroke="#dc8341" strokeWidth="2" />
      <text x="979" y="498" fontSize="11">30℃</text>
      <rect x="977" y="562" width="29" height="22" fill="#fff" stroke="#2b70a8" strokeWidth="2" />
      <text x="979" y="577" fontSize="11">15℃</text>
    </svg>
  );
}

export default function App() {
  return (
    <div className="flex min-h-screen bg-white font-['Liberation_Sans','Noto_Sans_CJK_JP',sans-serif] text-[12px] leading-[14px] text-black [font-feature-settings:'palt']">
      <div className="w-[3px] shrink-0 bg-[repeating-linear-gradient(#e8e9e9_0_23px,#4f8fc4_23px_24px,#e8e9e9_24px_25px)]" />
      <div className="min-w-0 flex-1 bg-[#f0f0f0]">
        <TitleBar />
        <Toolbar />
        <main className="ml-[5px] border-t border-b border-l border-[#666] bg-white">
          <DisplayRow />
          <div className="flex h-[242px]">
            <PlanPane plan={plans[0]} />
            <ScaleColumn />
            <PlanPane plan={plans[1]} />
          </div>
          <ControlRow />
          <PlanSelectRow />
          <YearChart />
        </main>
      </div>
    </div>
  );
}
